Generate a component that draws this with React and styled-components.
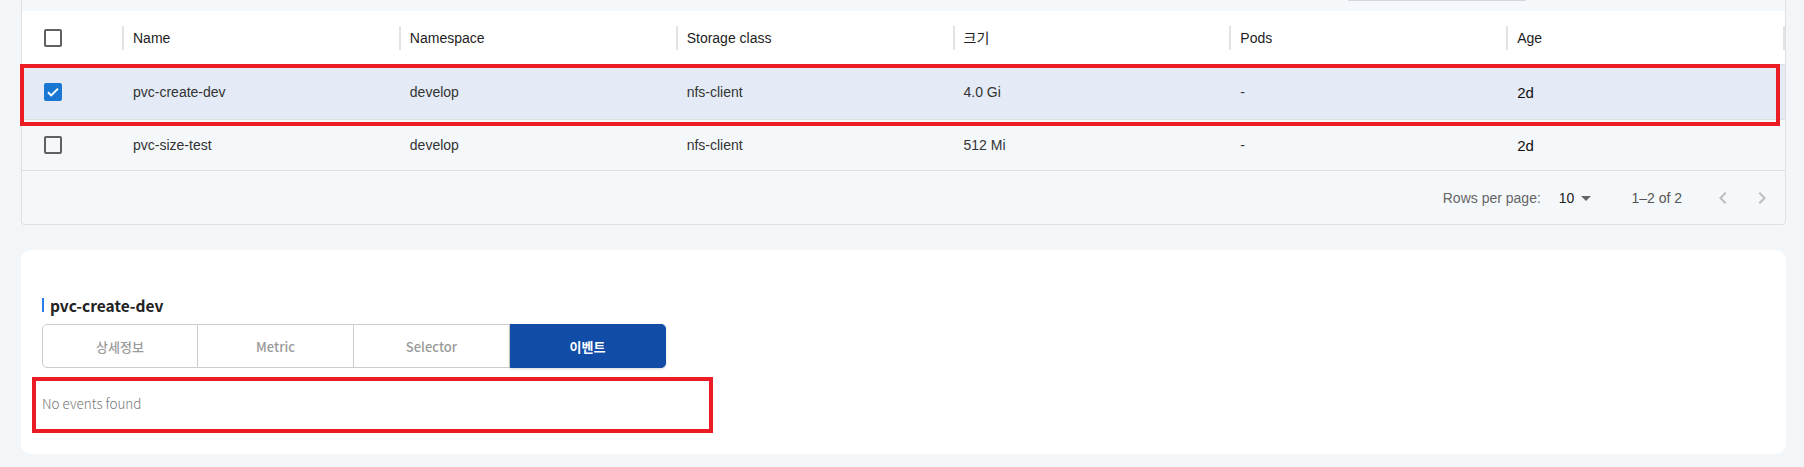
import React from 'react';
import styled, { createGlobalStyle } from 'styled-components';

const GlobalStyle = createGlobalStyle`
	body {
		margin: 0;
		background: #f3f6f9;
	}
	* {
		box-sizing: border-box;
	}
`;

const Page = styled.div`
	display: flex;
	flex-direction: column;
	gap: 25px;
	padding: 0 18px 13px 21px;
	font-family: 'Liberation Sans', Arial, 'Noto Sans CJK KR', sans-serif;
`;

const TableCard = styled.div`
	position: relative;
	background: #f5f8fb;
	border: 1px solid #e0e0e0;
	border-top: none;
	border-radius: 0 0 4px 4px;
`;

const Toolbar = styled.div`
	height: 11px;
	display: flex;
	justify-content: flex-end;
	padding-right: 259px;
`;

const SearchLine = styled.div`
	width: 178px;
	height: 1px;
	background: #d3d7db;
`;

const Grid = styled.div`
	display: grid;
	grid-template-columns: 100px repeat(6, 1fr) 2px;
	align-items: center;
`;

const HeaderRow = styled(Grid)`
	height: 54px;
	background: #fff;
	border-bottom: 1px solid #e0e0e0;
	color: #1d1d1d;
	font-size: 14px;
`;

const HeadLabel = styled.div`
	border-left: 2px solid #e3e3e3;
	padding-left: 9px;
	line-height: 24px;
`;

const EndSep = styled.div`
	height: 24px;
	background: #e3e3e3;
`;

const BodyRow = styled(Grid)`
	height: ${p => p.$h}px;
	background: ${p => (p.$selected ? '#e4ebf6' : 'transparent')};
	border-bottom: 1px solid #e0e0e0;
	color: #333;
	font-size: 14px;
`;

const Cell = styled.div`
	padding-left: 11px;
	color: ${p => (p.$dark ? '#111' : 'inherit')};
	font-size: ${p => (p.$dark ? '15px' : 'inherit')};
`;

const CheckCell = styled.div`
	padding-left: 22px;
	display: flex;
	align-items: center;
`;

const EmptyBox = styled.span`
	display: block;
	width: 18px;
	height: 18px;
	border: 2px solid #606060;
	border-radius: 2px;
`;

const Footer = styled.div`
	height: 53px;
	display: flex;
	justify-content: flex-end;
	align-items: center;
	padding-right: 11px;
	font-size: 14px;
	color: #666;
`;

const SelectValue = styled.div`
	display: flex;
	align-items: center;
	margin-left: 18px;
	color: #222;
`;

const PageInfo = styled.div`
	margin-left: 33px;
	color: #555;
`;

const NavButton = styled.div`
	display: flex;
	margin-left: ${p => p.$ml}px;
`;

const DetailCard = styled.div`
	position: relative;
	height: 204px;
	background: #fff;
	border-radius: 10px;
	padding: 43px 21px 0;
	font-family: 'Noto Sans CJK KR', 'Noto Sans', sans-serif;
`;

const TitleRow = styled.div`
	display: flex;
	align-items: center;
	gap: 6px;
	height: 24px;
`;

const TitleBar = styled.span`
	width: 2px;
	height: 14px;
	background: #2b7de9;
`;

const Title = styled.h3`
	margin: 0;
	font-size: 15.5px;
	font-weight: 700;
	color: #222;
`;

const Tabs = styled.div`
	display: flex;
	margin-top: 7px;
`;

const Tab = styled.div`
	width: 156px;
	height: 44px;
	display: flex;
	align-items: center;
	justify-content: center;
	font-size: 13px;
	font-weight: ${p => (p.$active ? 700 : 500)};
	color: ${p => (p.$active ? '#fff' : '#9a9a9a')};
	background: ${p => (p.$active ? '#114ca7' : '#fff')};
	border: 1px solid ${p => (p.$active ? '#114ca7' : '#cccccc')};
	border-left: ${p => (p.$first ? '1px solid #ccc' : 'none')};
	border-radius: ${p => (p.$first ? '5px 0 0 5px' : p.$last ? '0 5px 5px 0' : '0')};
	box-shadow: ${p => (p.$active ? '0 1px 3px rgba(0,0,0,0.15)' : 'none')};
`;

const EmptyText = styled.div`
	margin-top: 24px;
	font-size: 13.5px;
	line-height: 22px;
	font-weight: 300;
	color: #777;
`;

const Highlight = styled.div`
	position: absolute;
	left: ${p => p.$x}px;
	top: ${p => p.$y}px;
	width: ${p => p.$w}px;
	height: ${p => p.$h}px;
	border: 4px solid #ec1c24;
	pointer-events: none;
`;

const CheckedBox = () => (
	<svg width="18" height="18" viewBox="0 0 18 18">
		<rect width="18" height="18" rx="2" fill="#1976d2" />
		<path d="M4 9.2l3.2 3.2L14 5.6" fill="none" stroke="#fff" strokeWidth="2" />
	</svg>
);

const DropArrow = () => (
	<svg width="24" height="24" viewBox="0 0 24 24">
		<path d="M7 10l5 5 5-5z" fill="#666" />
	</svg>
);

const Chevron = ({ dir }) => (
	<svg width="24" height="24" viewBox="0 0 24 24">
		<path
			d={dir === 'left' ? 'M15.41 16.59 10.83 12l4.58-4.59L14 6l-6 6 6 6z' : 'M8.59 16.59 13.17 12 8.59 7.41 10 6l6 6-6 6z'}
			fill="#bdbdbd"
		/>
	</svg>
);

const columns = ['Name', 'Namespace', 'Storage class', '크기', 'Pods', 'Age'];

const rows = [
	{ name: 'pvc-create-dev', ns: 'develop', sc: 'nfs-client', size: '4.0 Gi', pods: '-', age: '2d', selected: true, h: 55 },
	{ name: 'pvc-size-test', ns: 'develop', sc: 'nfs-client', size: '512 Mi', pods: '-', age: '2d', selected: false, h: 51 },
];

const tabs = ['상세정보', 'Metric', 'Selector', '이벤트'];

export default function App() {
	return (
		<>
			<GlobalStyle />
			<Page>
				<TableCard>
					<Toolbar>
						<SearchLine />
					</Toolbar>
					<HeaderRow>
						<CheckCell>
							<EmptyBox />
						</CheckCell>
						{columns.map(c => (
							<HeadLabel key={c}>{c}</HeadLabel>
						))}
						<EndSep />
					</HeaderRow>
					{rows.map(r => (
						<BodyRow key={r.name} $h={r.h} $selected={r.selected}>
							<CheckCell>{r.selected ? <CheckedBox /> : <EmptyBox />}</CheckCell>
							<Cell>{r.name}</Cell>
							<Cell>{r.ns}</Cell>
							<Cell>{r.sc}</Cell>
							<Cell>{r.size}</Cell>
							<Cell>{r.pods}</Cell>
							<Cell $dark>{r.age}</Cell>
							<span />
						</BodyRow>
					))}
					<Footer>
						<span>Rows per page:</span>
						<SelectValue>
							10
							<DropArrow />
						</SelectValue>
						<PageInfo>1–2 of 2</PageInfo>
						<NavButton $ml={29}>
							<Chevron dir="left" />
						</NavButton>
						<NavButton $ml={15}>
							<Chevron dir="right" />
						</NavButton>
					</Footer>
					<Highlight $x={-2} $y={64} $w={1760} $h={62} />
				</TableCard>

				<DetailCard>
					<TitleRow>
						<TitleBar />
						<Title>pvc-create-dev</Title>
					</TitleRow>
					<Tabs>
						{tabs.map((t, i) => (
							<Tab key={t} $first={i === 0} $last={i === tabs.length - 1} $active={t === '이벤트'}>
								{t}
							</Tab>
						))}
					</Tabs>
					<EmptyText>No events found</EmptyText>
					<Highlight $x={11} $y={127} $w={681} $h={56} />
				</DetailCard>
			</Page>
		</>
	);
}
